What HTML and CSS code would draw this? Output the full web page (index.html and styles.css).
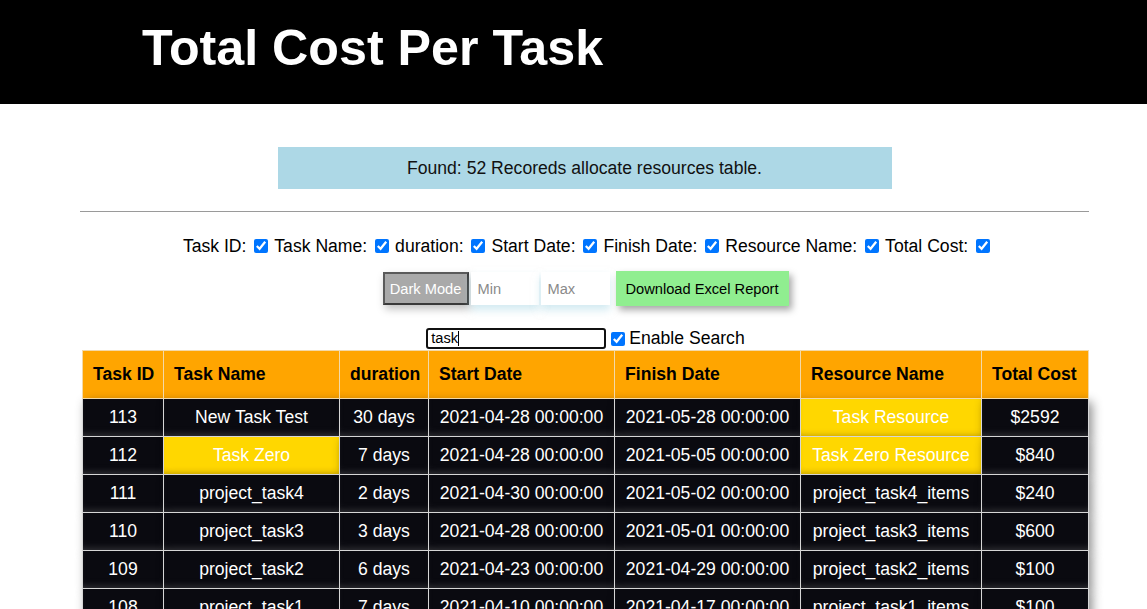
FILE: index.html
```html
<!DOCTYPE html>
<html>
<head>
<meta charset="utf-8">
<title>Total Cost Per Task</title>
<link rel="stylesheet" href="styles.css">
</head>
<body>
<header class="top">
  <h1 class="title">Total Cost Per Task</h1>
</header>
<main class="content">
  <div class="found">Found: 52 Recoreds allocate resources table.</div>
  <hr class="rule">
  <div class="toggles">
    <label class="toggle">Task ID: <input type="checkbox" checked></label>
    <label class="toggle">Task Name: <input type="checkbox" checked></label>
    <label class="toggle">duration: <input type="checkbox" checked></label>
    <label class="toggle">Start Date: <input type="checkbox" checked></label>
    <label class="toggle">Finish Date: <input type="checkbox" checked></label>
    <label class="toggle">Resource Name: <input type="checkbox" checked></label>
    <label class="toggle">Total Cost: <input type="checkbox" checked></label>
  </div>
  <div class="controls">
    <button class="dark-btn">Dark Mode</button>
    <input class="range" type="text" placeholder="Min">
    <input class="range range-max" type="text" placeholder="Max">
    <button class="excel-btn">Download Excel Report</button>
  </div>
  <div class="search-row">
    <span class="search-box">task<span class="caret"></span></span>
    <label class="enable"><input type="checkbox" checked> Enable Search</label>
  </div>
  <table class="grid">
    <thead>
      <tr>
        <th class="c-id">Task ID</th>
        <th class="c-name">Task Name</th>
        <th class="c-dur">duration</th>
        <th class="c-start">Start Date</th>
        <th class="c-finish">Finish Date</th>
        <th class="c-res">Resource Name</th>
        <th class="c-cost">Total Cost</th>
      </tr>
    </thead>
    <tbody>
      <tr><td>113</td><td>New Task Test</td><td>30 days</td><td>2021-04-28 00:00:00</td><td>2021-05-28 00:00:00</td><td class="hit">Task Resource</td><td>$2592</td></tr>
      <tr><td>112</td><td class="hit">Task Zero</td><td>7 days</td><td>2021-04-28 00:00:00</td><td>2021-05-05 00:00:00</td><td class="hit">Task Zero Resource</td><td>$840</td></tr>
      <tr><td>111</td><td>project_task4</td><td>2 days</td><td>2021-04-30 00:00:00</td><td>2021-05-02 00:00:00</td><td>project_task4_items</td><td>$240</td></tr>
      <tr><td>110</td><td>project_task3</td><td>3 days</td><td>2021-04-28 00:00:00</td><td>2021-05-01 00:00:00</td><td>project_task3_items</td><td>$600</td></tr>
      <tr><td>109</td><td>project_task2</td><td>6 days</td><td>2021-04-23 00:00:00</td><td>2021-04-29 00:00:00</td><td>project_task2_items</td><td>$100</td></tr>
      <tr><td>108</td><td>project_task1</td><td>7 days</td><td>2021-04-10 00:00:00</td><td>2021-04-17 00:00:00</td><td>project_task1_items</td><td>$100</td></tr>
    </tbody>
  </table>
</main>
</body>
</html>
```
FILE: styles.css
```css
* { box-sizing: border-box; }
html, body { margin: 0; padding: 0; background: #fff; }
body {
  font-family: "Liberation Sans", Arial, sans-serif;
  font-size: 17.6px;
  color: #000;
}
.top {
  background: #000;
  height: 104px;
  padding: 20px 0 0 142px;
}
.title {
  margin: 0;
  color: #fff;
  font-size: 50.2px;
  font-weight: bold;
  line-height: 57px;
}
.content {
  width: 1009px;
  margin-left: 80px;
  padding-top: 43px;
}
.found {
  width: 614px;
  height: 42px;
  margin: 0 auto;
  background: #add8e6;
  text-align: center;
  line-height: 42px;
  color: #111;
}
.rule {
  margin: 22px 0 0 0;
  border: 0;
  border-top: 1px solid #9a9a9a;
  height: 0;
}
.toggles {
  margin-top: 23px;
  height: 22px;
  display: flex;
  justify-content: center;
  align-items: center;
  gap: 6px;
  padding-left: 4px;
}
.toggle { display: inline-flex; align-items: center; white-space: pre; }
.toggle input, .enable input {
  width: 14px;
  height: 14px;
  margin: 0 0 0 3px;
  accent-color: #0075ff;
}
.controls {
  margin-top: 14px;
  height: 35px;
  display: flex;
  justify-content: center;
  align-items: center;
  padding-left: 2px;
}
.dark-btn {
  width: 86px;
  height: 33px;
  background: #a9a9a9;
  color: #fff;
  font-family: "Liberation Sans", Arial, sans-serif;
  font-size: 14.67px;
  border: 2px solid #3a3a3a;
  border-top-color: #5a5a5a;
  border-left-color: #5a5a5a;
  padding: 0;
  box-shadow: 2px 4px 8px rgba(0,0,0,.25);
}
.range {
  width: 68px;
  height: 33px;
  margin-left: 2px;
  border: 0;
  padding: 0 7px;
  font-family: "Liberation Sans", Arial, sans-serif;
  font-size: 14.67px;
  background: #fff;
  box-shadow: 0 5px 8px rgba(173,216,230,.55);
  outline: none;
}
.range::placeholder { color: #8a8a8a; }
.range-max { width: 69px; }
.excel-btn {
  margin-left: 6px;
  width: 173px;
  height: 35px;
  background: #90ee90;
  color: #000;
  border: 0;
  font-family: "Liberation Sans", Arial, sans-serif;
  font-size: 14.67px;
  padding: 0;
  box-shadow: 3px 4px 7px rgba(0,0,0,.35);
}
.search-row {
  margin-top: 21px;
  height: 23px;
  display: flex;
  justify-content: center;
  align-items: center;
  padding-left: 2px;
}
.search-box {
  width: 180px;
  height: 21px;
  border: 2px solid #111;
  border-radius: 3px;
  font-size: 14.67px;
  line-height: 17px;
  padding-left: 3px;
  display: flex;
  align-items: center;
}
.caret {
  display: inline-block;
  width: 1px;
  height: 15px;
  background: #000;
}
.enable {
  display: inline-flex;
  align-items: center;
  margin-left: 5px;
  gap: 4px;
}
.enable input { margin: 0; }
.grid {
  margin-left: 2px;
  width: 1006px;
  border-collapse: collapse;
  table-layout: fixed;
}
.grid th {
  background: #ffa500;
  height: 48px;
  text-align: left;
  padding: 0 10px;
  font-weight: bold;
  border: 1px solid #f3d9a8;
  white-space: nowrap;
}
.c-id { width: 81px; }
.c-name { width: 176px; }
.c-dur { width: 89px; }
.c-start { width: 186px; }
.c-finish { width: 186px; }
.c-res { width: 181px; }
.c-cost { width: 107px; }
.grid td {
  background: #0a0a10;
  color: #fff;
  height: 38px;
  text-align: center;
  padding: 0;
  border: 1px solid #d6d6d6;
  white-space: nowrap;
  box-shadow: 3px 3px 10px rgba(0,0,0,.45), inset 0 -6px 8px -6px rgba(200,200,200,.35);
}
.grid td.hit {
  background: #ffd700;
  color: #fff;
  box-shadow: 3px 3px 10px rgba(0,0,0,.35), inset 0 -4px 6px -4px rgba(150,110,0,.35);
}
```
